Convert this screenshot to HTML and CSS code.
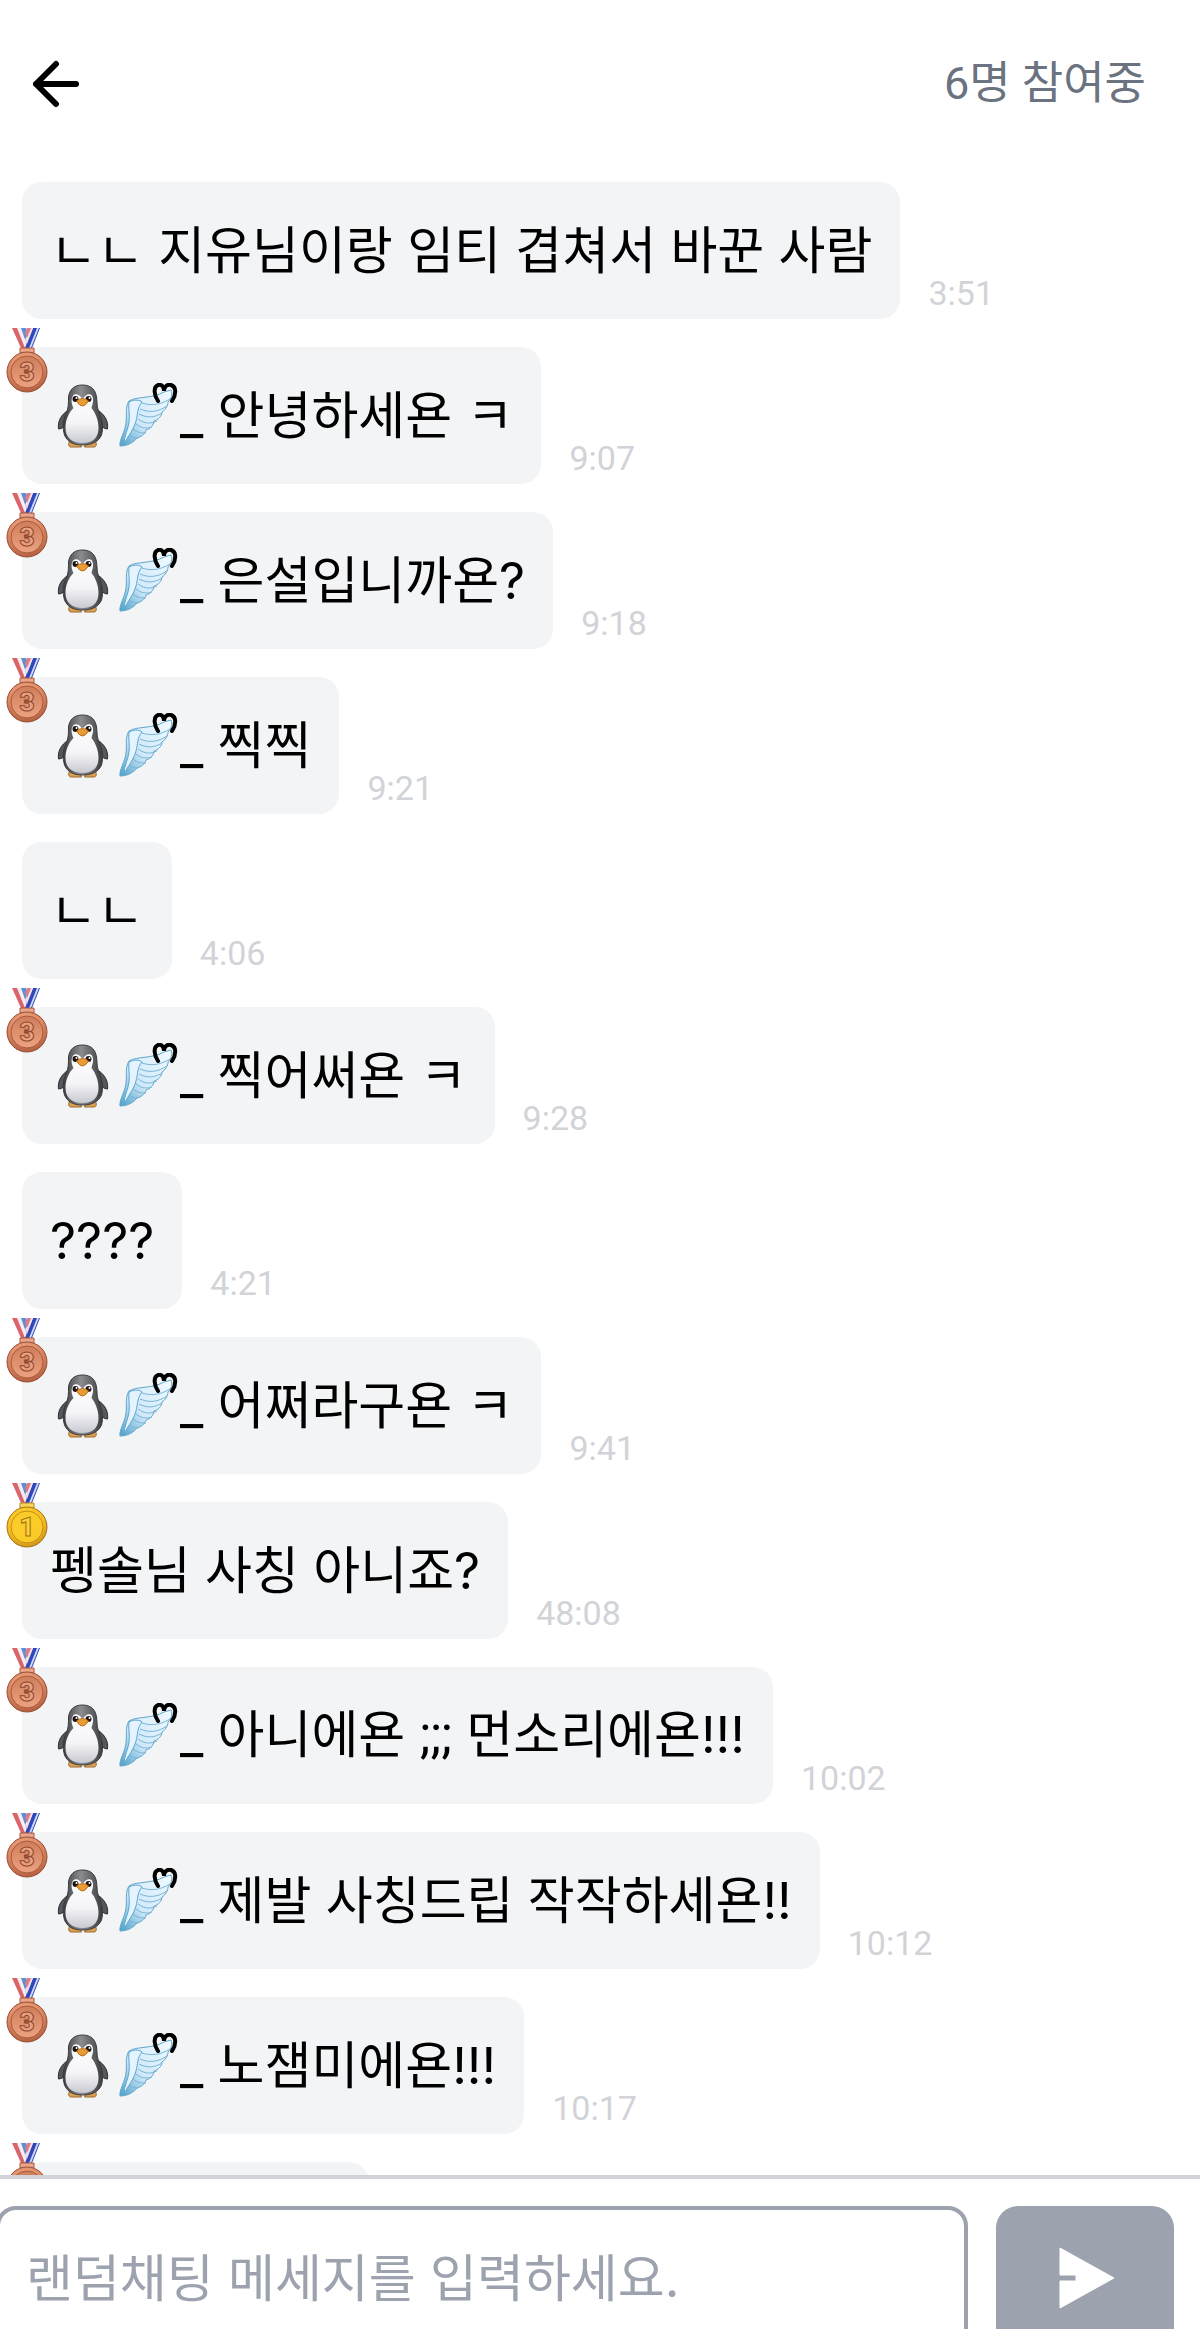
FILE: index.html
```html
<!DOCTYPE html>
<html lang="ko">
<head>
    <meta charset="utf-8">
    <meta name="viewport" content="width=device-width, initial-scale=1">
    <title>랜덤채팅</title>
    <link rel="stylesheet" href="styles.css">
</head>
<body>

<!-- shared icons -->
<svg class="sprites" aria-hidden="true">
    <defs>
        <radialGradient id="bronze" cx="45%" cy="30%" r="75%">
            <stop offset="0" stop-color="#f3ad88"/>
            <stop offset="0.6" stop-color="#d98560"/>
            <stop offset="1" stop-color="#a9573a"/>
        </radialGradient>
        <linearGradient id="bronze-face" x1="0" y1="0" x2="0" y2="1">
            <stop offset="0" stop-color="#cf7d5b"/>
            <stop offset="1" stop-color="#eda27f"/>
        </linearGradient>
        <radialGradient id="gold" cx="45%" cy="35%" r="75%">
            <stop offset="0" stop-color="#ffe23d"/>
            <stop offset="0.6" stop-color="#f6bd1e"/>
            <stop offset="1" stop-color="#b97f18"/>
        </radialGradient>
        <linearGradient id="coat" x1="0" y1="0" x2="1" y2="0">
            <stop offset="0" stop-color="#3c3d40"/>
            <stop offset="0.45" stop-color="#8b8c8f"/>
            <stop offset="1" stop-color="#3c3d40"/>
        </linearGradient>
        <linearGradient id="belly" x1="0" y1="0" x2="0" y2="1">
            <stop offset="0" stop-color="#ffffff"/>
            <stop offset="0.6" stop-color="#f4f4f7"/>
            <stop offset="1" stop-color="#c9c9d2"/>
        </linearGradient>
        <linearGradient id="feather" x1="1" y1="0" x2="0" y2="1">
            <stop offset="0" stop-color="#f2faff"/>
            <stop offset="0.6" stop-color="#cfe9fa"/>
            <stop offset="1" stop-color="#4d9ec6"/>
        </linearGradient>
    </defs>
    <symbol id="ribbon" viewBox="0 0 42 66">
        <path d="M6 1h7l9 20h-7z" fill="#d9656b"/>
        <path d="M11 1h4l8 20h-4z" fill="#f7eef4"/>
        <path d="M15 1h5l5 13-3 7z" fill="#5b8fd6"/>
        <path d="M27 1h7l-8 20h-7z" fill="#2f47b8"/>
        <path d="M24 1h3l-6 16-2-4z" fill="#f3dde6"/>
        <path d="M21 1h4l-4 10-2-5z" fill="#dd7c83"/>
        <path d="M31 1h2l-8 20h-2z" fill="#cfd9f5"/>
    </symbol>
    <symbol id="medal-3" viewBox="0 0 42 66">
        <use href="#ribbon"/>
        <path d="M14 21h14v5H14z" fill="#eaa58b" stroke="#a8583e"/>
        <circle cx="21" cy="45" r="20" fill="url(#bronze)" stroke="#9c5036" stroke-width="1"/>
        <circle cx="21" cy="45" r="16" fill="url(#bronze-face)" stroke="#a9583b" stroke-width="1"/>
    </symbol>
    <symbol id="medal-1" viewBox="0 0 42 66">
        <use href="#ribbon"/>
        <path d="M14 21h14v5H14z" fill="#f8d658" stroke="#b9862b"/>
        <circle cx="21" cy="45" r="20" fill="url(#gold)" stroke="#a8741c" stroke-width="1"/>
        <circle cx="21" cy="45" r="16" fill="#fbcb27" stroke="#c48c1b" stroke-width="1"/>
    </symbol>
    <symbol id="penguin" viewBox="0 0 64 66">
        <path d="M19 58q-2 5 1 6h11l-2-6zM45 58q2 5-1 6H34l2-6z" fill="#dca052" stroke="#9c6a30" stroke-width="1"/>
        <path d="M18 27C10 32 7 39 8 46q5 0 9-7zM47 27c8 5 11 12 10 19q-5 0-9-7z" fill="#55575c" stroke="#2b2c30" stroke-width="1"/>
        <path d="M32 2C23 2 19 7 18 14c0 7 0 10-2 16-4 7-4 15-2 22 3 7 9 10 18 10s16-3 19-10c2-7 1-15-2-22-3-6-2-9-3-16C45 7 41 2 32 2z" fill="url(#coat)" stroke="#3a3b3e" stroke-width="1"/>
        <path d="M23 12c3-2 6 0 9 4 3-4 6-6 9-4 3 4 1 9 0 13 4 5 7 12 7 20 0 9-5 15-16 15s-17-6-17-15c0-8 3-15 8-20-2-4-3-9 0-13z" fill="url(#belly)"/>
        <circle cx="25" cy="16" r="3" fill="#1f1512"/>
        <circle cx="38" cy="16" r="3" fill="#1f1512"/>
        <circle cx="26" cy="15" r="1" fill="#fff"/>
        <circle cx="39" cy="15" r="1" fill="#fff"/>
        <path d="M26 18q6-5 12 0-3 5-6 5t-6-5z" fill="#eb9b34" stroke="#b56d1d" stroke-width="1"/>
    </symbol>
    <symbol id="wing" viewBox="0 0 65 66">
        <path d="M5 63C4 57 10 49 11 40c1-8-1-16 3-22 8-5 23-2 35-9l7-2c2 4 0 9-3 12 0 4-3 8-6 10 0 4-4 8-8 9 0 4-4 8-8 9-1 4-5 7-9 8-3 4-9 8-17 8z" fill="url(#feather)" stroke="#5fa6cb" stroke-width="1"/>
        <path d="M14 19c6-3 11-2 13 0-5 6-4 12-6 19-2 8-8 15-12 23 0-8 4-14 5-22 1-7-1-14 0-20z" fill="#e5f3ff" stroke="#5aa6ce" stroke-width="1"/>
        <path d="M27 20c9 3 18 2 28-4M25 26c9 4 18 3 27-3M24 31c8 4 15 4 23-1M23 36c7 5 12 5 19 2M21 41c5 4 10 5 16 3M18 46c5 4 8 4 13 4M14 52c4 3 7 3 9 3" fill="none" stroke="#79b4d5" stroke-width="1"/>
        <path d="M43 18c-4-6-5-14 0-16 4-1 6 2 6 6 0-4 3-7 7-6 6 2 5 10 1 16" fill="none" stroke="#000" stroke-width="4" stroke-linecap="round"/>
    </symbol>
</svg>

<div class="chat">
    <header class="chat-header">
        <button class="back" type="button" aria-label="뒤로">
            <svg viewBox="0 0 48 48" width="48" height="48" fill="none" stroke="#000" stroke-width="6" stroke-linecap="round" stroke-linejoin="round">
                <path d="M24 4 4 24l20 20M4 24h40"/>
            </svg>
        </button>
        <span class="member-count">6명 참여중</span>
    </header>

    <ol class="messages">
        <li class="message">
            <p class="bubble">ㄴㄴ 지유님이랑 임티 겹쳐서 바꾼 사람</p>
            <time class="time">3:51</time>
        </li>
        <li class="message">
            <svg class="medal bronze"><use href="#medal-3"/><text x="21" y="54">3</text></svg>
            <p class="bubble"><svg class="emoji"><use href="#penguin"/></svg><svg class="emoji"><use href="#wing"/></svg>_ 안녕하세욘 ㅋ</p>
            <time class="time">9:07</time>
        </li>
        <li class="message">
            <svg class="medal bronze"><use href="#medal-3"/><text x="21" y="54">3</text></svg>
            <p class="bubble"><svg class="emoji"><use href="#penguin"/></svg><svg class="emoji"><use href="#wing"/></svg>_ 은설입니까욘?</p>
            <time class="time">9:18</time>
        </li>
        <li class="message">
            <svg class="medal bronze"><use href="#medal-3"/><text x="21" y="54">3</text></svg>
            <p class="bubble"><svg class="emoji"><use href="#penguin"/></svg><svg class="emoji"><use href="#wing"/></svg>_ 찍찍</p>
            <time class="time">9:21</time>
        </li>
        <li class="message">
            <p class="bubble">ㄴㄴ</p>
            <time class="time">4:06</time>
        </li>
        <li class="message">
            <svg class="medal bronze"><use href="#medal-3"/><text x="21" y="54">3</text></svg>
            <p class="bubble"><svg class="emoji"><use href="#penguin"/></svg><svg class="emoji"><use href="#wing"/></svg>_ 찍어써욘 ㅋ</p>
            <time class="time">9:28</time>
        </li>
        <li class="message">
            <p class="bubble">????</p>
            <time class="time">4:21</time>
        </li>
        <li class="message">
            <svg class="medal bronze"><use href="#medal-3"/><text x="21" y="54">3</text></svg>
            <p class="bubble"><svg class="emoji"><use href="#penguin"/></svg><svg class="emoji"><use href="#wing"/></svg>_ 어쩌라구욘 ㅋ</p>
            <time class="time">9:41</time>
        </li>
        <li class="message">
            <svg class="medal gold"><use href="#medal-1"/><text x="21" y="54">1</text></svg>
            <p class="bubble">펭솔님 사칭 아니죠?</p>
            <time class="time">48:08</time>
        </li>
        <li class="message">
            <svg class="medal bronze"><use href="#medal-3"/><text x="21" y="54">3</text></svg>
            <p class="bubble"><svg class="emoji"><use href="#penguin"/></svg><svg class="emoji"><use href="#wing"/></svg><span>_ 아니에욘 <span class="marks">;;;</span> 먼소리에욘!!!</span></p>
            <time class="time">10:02</time>
        </li>
        <li class="message">
            <svg class="medal bronze"><use href="#medal-3"/><text x="21" y="54">3</text></svg>
            <p class="bubble"><svg class="emoji"><use href="#penguin"/></svg><svg class="emoji"><use href="#wing"/></svg>_ 제발 사칭드립 작작하세욘!!</p>
            <time class="time">10:12</time>
        </li>
        <li class="message">
            <svg class="medal bronze"><use href="#medal-3"/><text x="21" y="54">3</text></svg>
            <p class="bubble"><svg class="emoji"><use href="#penguin"/></svg><svg class="emoji"><use href="#wing"/></svg>_ 노잼미에욘!!!</p>
            <time class="time">10:17</time>
        </li>
        <li class="message">
            <svg class="medal bronze"><use href="#medal-3"/></svg>
            <p class="bubble"><svg class="emoji"><use href="#penguin"/></svg><svg class="emoji"><use href="#wing"/></svg>_ 찍찍!!</p>
        </li>
    </ol>

    <form class="composer">
        <input class="composer-input" type="text" placeholder="랜덤채팅 메세지를 입력하세요." aria-label="메세지">
        <button class="send" type="button" aria-label="보내기">
            <svg viewBox="0 0 56 62" width="56" height="62">
                <path d="M1 1 55 31 1 61V34h16v-6H1z" fill="#fff" stroke="#fff" stroke-width="1" stroke-linejoin="round"/>
            </svg>
        </button>
    </form>
</div>

</body>
</html>
```
FILE: styles.css
```css
:root {
    --bubble: #f2f4f6;
    --gray: #9ca3af;
    --line: #d1d3d8;
    --time: #d1d3d8;
    --count: #6b7280;
}

* {
    box-sizing: border-box;
}

body {
    margin: 0;
    background: #fff;
    color: #000;
    font-family: Inter, "Noto Sans CJK KR", sans-serif;
    overflow: hidden;
}

button {
    border: 0;
    padding: 0;
    background: none;
    cursor: pointer;
}

.sprites {
    position: absolute;
    width: 0;
    height: 0;
}

.chat {
    display: flex;
    flex-direction: column;
    height: 100vh;
}

.chat-header {
    display: flex;
    flex: none;
    align-items: center;
    justify-content: space-between;
    height: 162px;
    padding: 6px 54px 0 32px;
}

.back {
    display: flex;
}

.member-count {
    color: var(--count);
    font-family: Roboto, "Noto Sans CJK KR", sans-serif;
    font-size: 45px;
    line-height: 60px;
}

.messages {
    display: flex;
    flex: 1;
    flex-direction: column;
    gap: 28px;
    min-height: 0;
    margin: 0;
    padding: 20px 22px 0;
    list-style: none;
    overflow: hidden;
}

.message {
    position: relative;
    display: flex;
    flex: none;
    align-items: flex-end;
    gap: 28px;
}

.bubble {
    display: flex;
    align-items: center;
    height: 137px;
    margin: 0;
    padding: 0 28px;
    border-radius: 20px;
    background: var(--bubble);
    font-size: 51px;
    line-height: 60px;
    white-space: pre;
}

.marks {
    font-family: Roboto, sans-serif;
}

.emoji {
    width: 65px;
    height: 66px;
}

/* hangs over the bubble's top left corner */
.medal {
    position: absolute;
    top: -20px;
    left: -16px;
    width: 42px;
    height: 66px;
    font-family: Roboto, sans-serif;
    font-size: 26px;
    font-weight: 900;
    text-anchor: middle;
}

.bronze text {
    fill: #e8a07e;
    stroke: #8d4630;
}

.gold text {
    fill: #f9cf38;
    stroke: #a06f16;
}

.time {
    padding-bottom: 6px;
    color: var(--time);
    font-family: Roboto, sans-serif;
    font-size: 34px;
    line-height: 40px;
}

.composer {
    display: flex;
    flex: none;
    gap: 28px;
    margin-bottom: -21px;
    padding: 27px 26px 0 0;
    border-top: 4px solid var(--line);
}

.composer-input {
    flex: 1;
    min-width: 0;
    height: 144px;
    margin-left: -4px;
    padding: 0 26px;
    border: 4px solid var(--gray);
    border-radius: 20px;
    font-family: inherit;
    font-size: 51px;
    line-height: 60px;
}

.composer-input::placeholder {
    color: var(--gray);
    opacity: 1;
}

.send {
    display: flex;
    align-items: center;
    justify-content: center;
    width: 178px;
    height: 144px;
    padding-left: 4px;
    border-radius: 22px;
    background: var(--gray);
}
```
